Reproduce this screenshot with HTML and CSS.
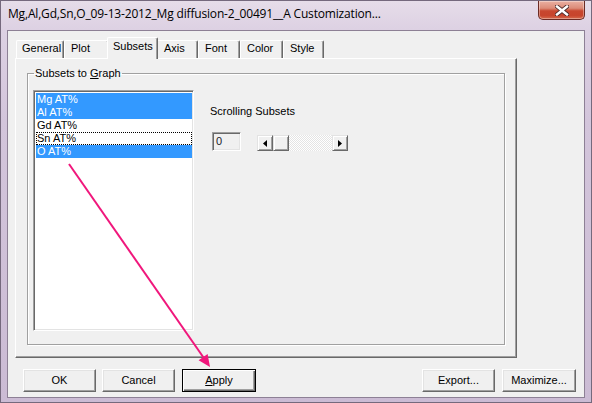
FILE: index.html
```html
<!DOCTYPE html>
<html>
<head>
<meta charset="utf-8">
<link rel="stylesheet" href="styles.css">
</head>
<body>
<div class="window">
  <div class="titlebar">
    <span class="title">Mg,Al,Gd,Sn,O_09-13-2012_Mg diffusion-2_00491__A Customization...</span>
    <div class="close">
      <svg width="14" height="11" viewBox="0 0 14 11">
        <path d="M2 1.5 L12 9.5 M12 1.5 L2 9.5" stroke="#4a2a2a" stroke-width="4.2" stroke-linecap="square"/>
        <path d="M2 1.5 L12 9.5 M12 1.5 L2 9.5" stroke="#ffffff" stroke-width="2.4" stroke-linecap="square"/>
      </svg>
    </div>
  </div>
  <div class="frame-body">
    <div class="client">
      <div class="tabs">
        <div class="tab w-general">General</div>
        <div class="tab w-plot">Plot</div>
        <div class="tab w-subsets active">Subsets</div>
        <div class="tab w-axis">Axis</div>
        <div class="tab w-font">Font</div>
        <div class="tab w-color">Color</div>
        <div class="tab w-style">Style</div>
      </div>
      <div class="panel">
        <fieldset class="group">
          <legend>Subsets to <u>G</u>raph</legend>
          <div class="group-body">
            <div class="listbox">
              <div class="item sel">Mg AT%</div>
              <div class="item sel">Al AT%</div>
              <div class="item">Gd AT%</div>
              <div class="item focus">Sn AT%</div>
              <div class="item sel">O AT%</div>
            </div>
            <div class="scroll-area">
              <div class="label">Scrolling Subsets</div>
              <div class="scroll-row">
                <div class="edit">0</div>
                <div class="hscroll">
                  <div class="sb-btn">
                    <svg width="4" height="7" viewBox="0 0 4 7"><path d="M4 0 L0 3.5 L4 7 Z" fill="#000"/></svg>
                  </div>
                  <div class="sb-thumb"></div>
                  <div class="sb-track"></div>
                  <div class="sb-btn">
                    <svg width="4" height="7" viewBox="0 0 4 7"><path d="M0 0 L4 3.5 L0 7 Z" fill="#000"/></svg>
                  </div>
                </div>
              </div>
            </div>
          </div>
        </fieldset>
      </div>
      <div class="buttons">
        <div class="btn-group">
          <div class="btn w73">OK</div>
          <div class="btn w73 gap6">Cancel</div>
          <div class="btn w74 gap7 default"><u>A</u>pply</div>
        </div>
        <div class="btn-group">
          <div class="btn w73">Export...</div>
          <div class="btn w74 gap7">Maximize...</div>
        </div>
      </div>
    </div>
  </div>
  <svg class="arrow" width="592" height="403" viewBox="0 0 592 403">
    <line x1="69" y1="164" x2="203.5" y2="357.5" stroke="#f0177c" stroke-width="2"/>
    <path d="M210 367 L198.6 360.3 L207.6 354 Z" fill="#f0177c"/>
  </svg>
</div>
</body>
</html>
```

FILE: styles.css
```css
* { box-sizing: border-box; }
html, body { margin: 0; padding: 0; }
body {
  width: 592px;
  height: 403px;
  overflow: hidden;
  background: #cdbfd6;
  font-family: "Liberation Sans", Arial, sans-serif;
  font-size: 11px;
  color: #000;
}
.window {
  position: relative;
  width: 592px;
  height: 403px;
  border: 1px solid #75697d;
  background: linear-gradient(180deg, #e6dde9 0px, #ddd1e3 28px, #d3c5db 120px, #cbbbd4 403px);
  display: flex;
  flex-direction: column;
}
.titlebar {
  height: 29px;
  display: flex;
  align-items: flex-start;
  flex: none;
}
.title {
  font-family: "Open Sans", "Noto Sans", sans-serif;
  font-size: 12px;
  letter-spacing: -0.17px;
  line-height: 16px;
  padding: 5px 0 0 7px;
  color: #000;
  white-space: nowrap;
}
.close {
  margin-left: auto;
  margin-right: 6px;
  width: 47px;
  height: 19px;
  border: 1px solid #6b2b24;
  border-top: none;
  border-radius: 0 0 5px 5px;
  background: linear-gradient(180deg, #eab0a2 0%, #dc8b78 40%, #c8472f 55%, #c7442c 80%, #d56a4c 100%);
  box-shadow: inset 0 0 0 1px rgba(255,255,255,0.35);
  display: flex;
  align-items: center;
  justify-content: center;
}
.frame-body {
  flex: none;
  padding: 0 6px;
}
.client {
  width: 578px;
  height: 368px;
  border: 1px solid #8d8095;
  background: #f0f0f0;
  padding: 6px 8px 0 7px;
  display: flex;
  flex-direction: column;
}
.tabs {
  height: 21px;
  margin-left: 1px;
  display: flex;
  align-items: flex-end;
  position: relative;
  z-index: 2;
  flex: none;
}
.tab {
  height: 18px;
  padding: 1px 0 0 6px;
  line-height: 13px;
  border-top: 1px solid #fff;
  border-left: 1px solid #fff;
  border-right: 1px solid #696969;
  box-shadow: inset -1px 0 0 #a0a0a0;
  border-radius: 2px 2px 0 0;
  background: #f0f0f0;
  white-space: nowrap;
}
.tab.active {
  height: 22px;
  margin: 0 -2px -1px -2px;
  padding: 2px 0 0 5px;
  position: relative;
  z-index: 3;
}
.w-general { width: 48px; padding-left: 5px; }
.w-plot { width: 45px; }
.w-subsets { width: 51px; }
.w-axis { width: 42px; padding-left: 7px; }
.w-font { width: 42px; }
.w-color { width: 43px; }
.w-style { width: 41px; }

.panel {
  width: 502px;
  height: 300px;
  border-top: 1px solid #fff;
  border-left: 1px solid #fff;
  border-right: 1px solid #696969;
  border-bottom: 1px solid #696969;
  box-shadow: inset -1px -1px 0 #a0a0a0;
  position: relative;
  z-index: 1;
  flex: none;
  padding: 8px 0 0 11px;
}
.group {
  margin: 0;
  width: 478px;
  height: 278px;
  border: 1px solid #a0a0a0;
  box-shadow: 1px 1px 0 #fff, inset 1px 1px 0 #fff;
  padding: 10px 0 0 5px;
}
.group legend {
  padding: 0 1px;
  margin-left: 1px;
  line-height: 13px;
  font-size: 11px;
}
.group-body {
  display: flex;
  align-items: flex-start;
}
.listbox {
  width: 161px;
  height: 241px;
  background: #fff;
  border-top: 1px solid #a0a0a0;
  border-left: 1px solid #a0a0a0;
  border-right: 1px solid #fff;
  border-bottom: 1px solid #fff;
  box-shadow: inset 1px 1px 0 #696969, inset -1px -1px 0 #e3e3e3;
  padding: 2px 1px 0 2px;
  flex: none;
}
.item {
  height: 13px;
  line-height: 13px;
  padding-left: 1px;
  color: #000;
  white-space: nowrap;
}
.item.sel {
  background: #3399ff;
  color: #fff;
}
.item.focus {
  outline: 1px dotted #000;
  outline-offset: -1px;
}
.scroll-area {
  margin-left: 16px;
  padding-top: 15px;
}
.label {
  line-height: 13px;
  white-space: nowrap;
}
.scroll-row {
  display: flex;
  align-items: flex-start;
  margin-top: 14px;
  margin-left: 2px;
}
.edit {
  width: 29px;
  height: 19px;
  border-top: 1px solid #a0a0a0;
  border-left: 1px solid #a0a0a0;
  border-right: 1px solid #fff;
  border-bottom: 1px solid #fff;
  box-shadow: inset 1px 1px 0 #696969, inset -1px -1px 0 #e3e3e3;
  background: #f0f0f0;
  padding: 2px 0 0 3px;
  line-height: 13px;
  color: #1a1a2a;
}
.hscroll {
  margin-left: 16px;
  margin-top: 3px;
  width: 91px;
  height: 16px;
  display: flex;
}
.sb-btn, .sb-thumb {
  width: 16px;
  height: 16px;
  flex: none;
  background: #f0f0f0;
  border-top: 1px solid #e3e3e3;
  border-left: 1px solid #e3e3e3;
  border-right: 1px solid #696969;
  border-bottom: 1px solid #696969;
  box-shadow: inset 1px 1px 0 #fff, inset -1px -1px 0 #a0a0a0;
  display: flex;
  align-items: center;
  justify-content: center;
}
.sb-track {
  flex: 1;
  height: 16px;
  background: repeating-conic-gradient(#ffffff 0 25%, #e4e4e4 0 50%) 0 0 / 2px 2px;
}
.buttons {
  margin-top: 11px;
  display: flex;
  justify-content: space-between;
  padding-left: 8px;
  flex: none;
}
.btn-group {
  display: flex;
}
.btn {
  height: 23px;
  background: #f0f0f0;
  border-top: 1px solid #fff;
  border-left: 1px solid #fff;
  border-right: 1px solid #696969;
  border-bottom: 1px solid #696969;
  box-shadow: inset -1px -1px 0 #a0a0a0, inset 1px 1px 0 #e3e3e3;
  display: flex;
  align-items: center;
  justify-content: center;
  line-height: 13px;
  white-space: nowrap;
}
.btn.default {
  border: 1px solid #000;
  box-shadow: inset 1px 1px 0 #fff, inset -1px -1px 0 #696969, inset -2px -2px 0 #a0a0a0;
}
.w73 { width: 73px; }
.w74 { width: 74px; }
.gap6 { margin-left: 6px; }
.gap7 { margin-left: 7px; }
.arrow {
  position: absolute;
  left: -1px;
  top: -1px;
  z-index: 10;
  pointer-events: none;
}
```
